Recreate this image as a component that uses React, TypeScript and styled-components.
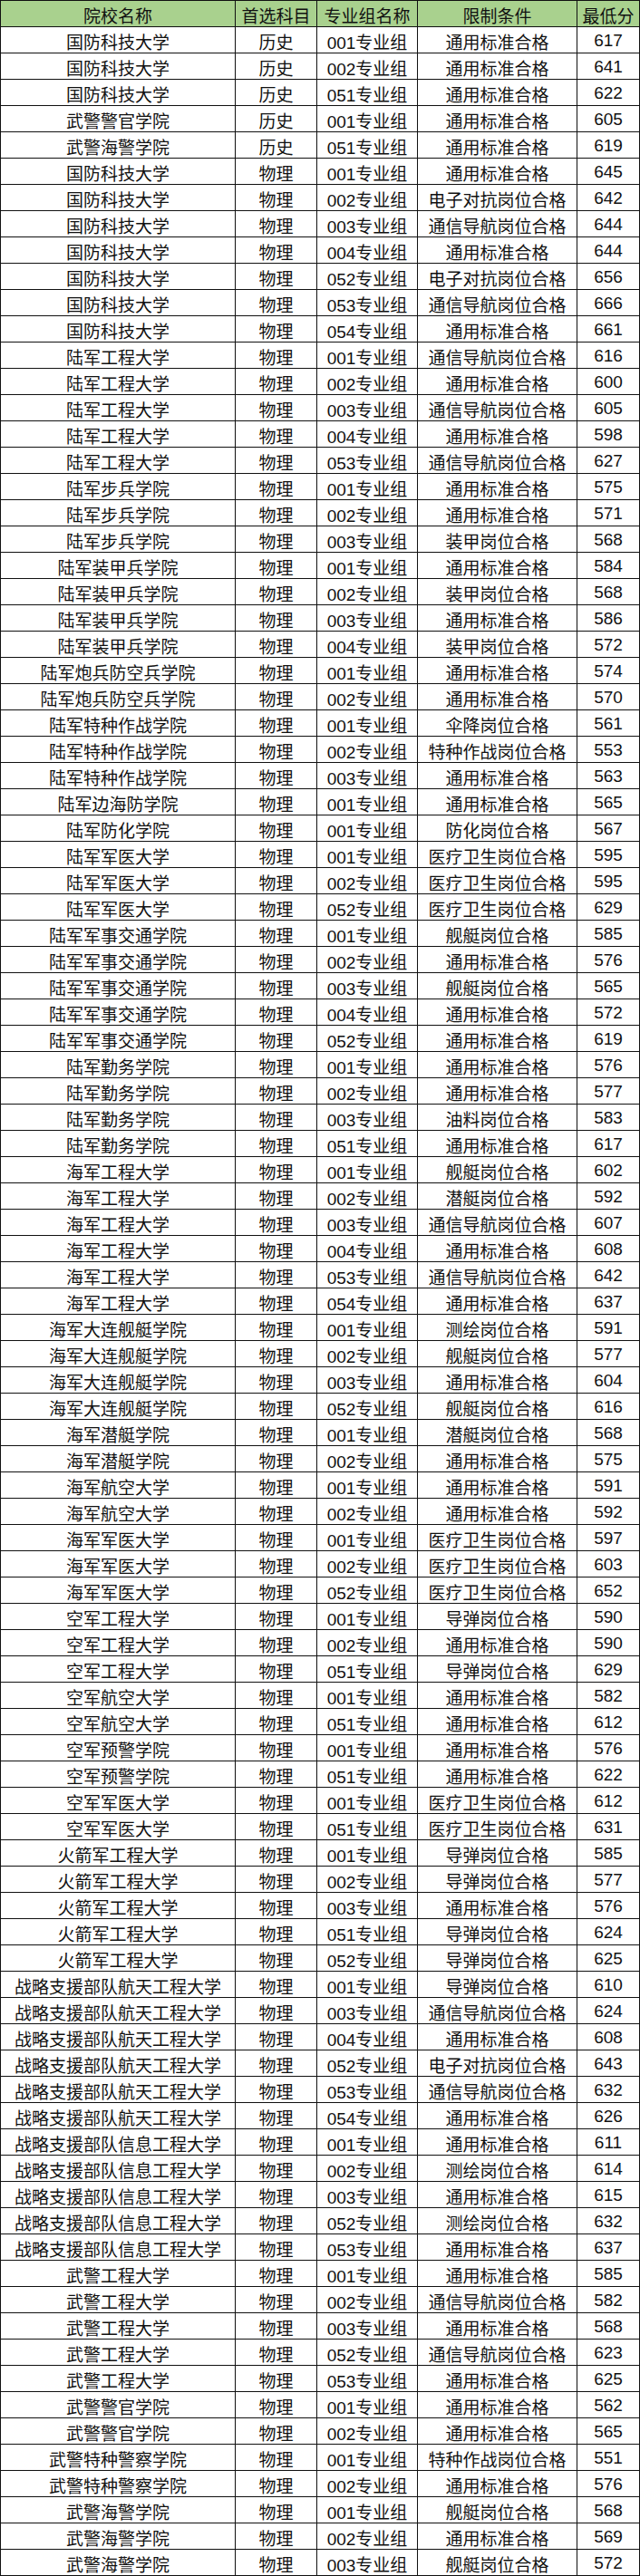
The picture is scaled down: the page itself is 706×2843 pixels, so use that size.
import React from 'react'
import styled, { createGlobalStyle } from 'styled-components'

type Row = [string, string, string, string, number]

const ROWS: Row[] = [
    ['国防科技大学', '历史', '001', '通用标准合格', 617],
    ['国防科技大学', '历史', '002', '通用标准合格', 641],
    ['国防科技大学', '历史', '051', '通用标准合格', 622],
    ['武警警官学院', '历史', '001', '通用标准合格', 605],
    ['武警海警学院', '历史', '051', '通用标准合格', 619],
    ['国防科技大学', '物理', '001', '通用标准合格', 645],
    ['国防科技大学', '物理', '002', '电子对抗岗位合格', 642],
    ['国防科技大学', '物理', '003', '通信导航岗位合格', 644],
    ['国防科技大学', '物理', '004', '通用标准合格', 644],
    ['国防科技大学', '物理', '052', '电子对抗岗位合格', 656],
    ['国防科技大学', '物理', '053', '通信导航岗位合格', 666],
    ['国防科技大学', '物理', '054', '通用标准合格', 661],
    ['陆军工程大学', '物理', '001', '通信导航岗位合格', 616],
    ['陆军工程大学', '物理', '002', '通用标准合格', 600],
    ['陆军工程大学', '物理', '003', '通信导航岗位合格', 605],
    ['陆军工程大学', '物理', '004', '通用标准合格', 598],
    ['陆军工程大学', '物理', '053', '通信导航岗位合格', 627],
    ['陆军步兵学院', '物理', '001', '通用标准合格', 575],
    ['陆军步兵学院', '物理', '002', '通用标准合格', 571],
    ['陆军步兵学院', '物理', '003', '装甲岗位合格', 568],
    ['陆军装甲兵学院', '物理', '001', '通用标准合格', 584],
    ['陆军装甲兵学院', '物理', '002', '装甲岗位合格', 568],
    ['陆军装甲兵学院', '物理', '003', '通用标准合格', 586],
    ['陆军装甲兵学院', '物理', '004', '装甲岗位合格', 572],
    ['陆军炮兵防空兵学院', '物理', '001', '通用标准合格', 574],
    ['陆军炮兵防空兵学院', '物理', '002', '通用标准合格', 570],
    ['陆军特种作战学院', '物理', '001', '伞降岗位合格', 561],
    ['陆军特种作战学院', '物理', '002', '特种作战岗位合格', 553],
    ['陆军特种作战学院', '物理', '003', '通用标准合格', 563],
    ['陆军边海防学院', '物理', '001', '通用标准合格', 565],
    ['陆军防化学院', '物理', '001', '防化岗位合格', 567],
    ['陆军军医大学', '物理', '001', '医疗卫生岗位合格', 595],
    ['陆军军医大学', '物理', '002', '医疗卫生岗位合格', 595],
    ['陆军军医大学', '物理', '052', '医疗卫生岗位合格', 629],
    ['陆军军事交通学院', '物理', '001', '舰艇岗位合格', 585],
    ['陆军军事交通学院', '物理', '002', '通用标准合格', 576],
    ['陆军军事交通学院', '物理', '003', '舰艇岗位合格', 565],
    ['陆军军事交通学院', '物理', '004', '通用标准合格', 572],
    ['陆军军事交通学院', '物理', '052', '通用标准合格', 619],
    ['陆军勤务学院', '物理', '001', '通用标准合格', 576],
    ['陆军勤务学院', '物理', '002', '通用标准合格', 577],
    ['陆军勤务学院', '物理', '003', '油料岗位合格', 583],
    ['陆军勤务学院', '物理', '051', '通用标准合格', 617],
    ['海军工程大学', '物理', '001', '舰艇岗位合格', 602],
    ['海军工程大学', '物理', '002', '潜艇岗位合格', 592],
    ['海军工程大学', '物理', '003', '通信导航岗位合格', 607],
    ['海军工程大学', '物理', '004', '通用标准合格', 608],
    ['海军工程大学', '物理', '053', '通信导航岗位合格', 642],
    ['海军工程大学', '物理', '054', '通用标准合格', 637],
    ['海军大连舰艇学院', '物理', '001', '测绘岗位合格', 591],
    ['海军大连舰艇学院', '物理', '002', '舰艇岗位合格', 577],
    ['海军大连舰艇学院', '物理', '003', '通用标准合格', 604],
    ['海军大连舰艇学院', '物理', '052', '舰艇岗位合格', 616],
    ['海军潜艇学院', '物理', '001', '潜艇岗位合格', 568],
    ['海军潜艇学院', '物理', '002', '通用标准合格', 575],
    ['海军航空大学', '物理', '001', '通用标准合格', 591],
    ['海军航空大学', '物理', '002', '通用标准合格', 592],
    ['海军军医大学', '物理', '001', '医疗卫生岗位合格', 597],
    ['海军军医大学', '物理', '002', '医疗卫生岗位合格', 603],
    ['海军军医大学', '物理', '052', '医疗卫生岗位合格', 652],
    ['空军工程大学', '物理', '001', '导弹岗位合格', 590],
    ['空军工程大学', '物理', '002', '通用标准合格', 590],
    ['空军工程大学', '物理', '051', '导弹岗位合格', 629],
    ['空军航空大学', '物理', '001', '通用标准合格', 582],
    ['空军航空大学', '物理', '051', '通用标准合格', 612],
    ['空军预警学院', '物理', '001', '通用标准合格', 576],
    ['空军预警学院', '物理', '051', '通用标准合格', 622],
    ['空军军医大学', '物理', '001', '医疗卫生岗位合格', 612],
    ['空军军医大学', '物理', '051', '医疗卫生岗位合格', 631],
    ['火箭军工程大学', '物理', '001', '导弹岗位合格', 585],
    ['火箭军工程大学', '物理', '002', '导弹岗位合格', 577],
    ['火箭军工程大学', '物理', '003', '通用标准合格', 576],
    ['火箭军工程大学', '物理', '051', '导弹岗位合格', 624],
    ['火箭军工程大学', '物理', '052', '导弹岗位合格', 625],
    ['战略支援部队航天工程大学', '物理', '001', '导弹岗位合格', 610],
    ['战略支援部队航天工程大学', '物理', '003', '通信导航岗位合格', 624],
    ['战略支援部队航天工程大学', '物理', '004', '通用标准合格', 608],
    ['战略支援部队航天工程大学', '物理', '052', '电子对抗岗位合格', 643],
    ['战略支援部队航天工程大学', '物理', '053', '通信导航岗位合格', 632],
    ['战略支援部队航天工程大学', '物理', '054', '通用标准合格', 626],
    ['战略支援部队信息工程大学', '物理', '001', '通用标准合格', 611],
    ['战略支援部队信息工程大学', '物理', '002', '测绘岗位合格', 614],
    ['战略支援部队信息工程大学', '物理', '003', '通用标准合格', 615],
    ['战略支援部队信息工程大学', '物理', '052', '测绘岗位合格', 632],
    ['战略支援部队信息工程大学', '物理', '053', '通用标准合格', 637],
    ['武警工程大学', '物理', '001', '通用标准合格', 585],
    ['武警工程大学', '物理', '002', '通信导航岗位合格', 582],
    ['武警工程大学', '物理', '003', '通用标准合格', 568],
    ['武警工程大学', '物理', '052', '通信导航岗位合格', 623],
    ['武警工程大学', '物理', '053', '通用标准合格', 625],
    ['武警警官学院', '物理', '001', '通用标准合格', 562],
    ['武警警官学院', '物理', '002', '通用标准合格', 565],
    ['武警特种警察学院', '物理', '001', '特种作战岗位合格', 551],
    ['武警特种警察学院', '物理', '002', '通用标准合格', 576],
    ['武警海警学院', '物理', '001', '舰艇岗位合格', 568],
    ['武警海警学院', '物理', '002', '通用标准合格', 569],
    ['武警海警学院', '物理', '003', '舰艇岗位合格', 572],
]

const HEADERS = ['院校名称', '首选科目', '专业组名称', '限制条件', '最低分']

const GlobalStyle = createGlobalStyle`
  html, body {
    margin: 0;
    padding: 0;
    background: #ffffff;
  }
`

const Sheet = styled.div`
  width: 706px;
  box-sizing: border-box;
  border-top: 1px solid #111;
  border-left: 1px solid #111;
  font-family: "Liberation Sans", "Noto Sans CJK SC", sans-serif;
  font-size: 19px;
  color: #111;
`

const SheetRow = styled.div<{ $head?: boolean }>`
  display: grid;
  grid-template-columns: 259px 90px 111px 176px 69px;
  height: 29px;
  background: ${p => (p.$head ? '#a9d18e' : '#ffffff')};
`

const Cell = styled.div`
  box-sizing: border-box;
  height: 29px;
  border-right: 1px solid #111;
  border-bottom: 1px solid #111;
  display: flex;
  align-items: center;
  justify-content: center;
  padding-top: 2px;
  white-space: nowrap;
  overflow: hidden;
`

const App: React.FC = () => {
    return (
        <>
            <GlobalStyle />
            <Sheet>
                <SheetRow $head>
                    {HEADERS.map(h => <Cell key={h}>{h}</Cell>)}
                </SheetRow>
                {ROWS.map(([school, subject, group, limit, score], i) => (
                    <SheetRow key={i}>
                        <Cell>{school}</Cell>
                        <Cell>{subject}</Cell>
                        <Cell>{group}专业组</Cell>
                        <Cell>{limit}</Cell>
                        <Cell>{score}</Cell>
                    </SheetRow>
                ))}
            </Sheet>
        </>
    )
}

export default App
